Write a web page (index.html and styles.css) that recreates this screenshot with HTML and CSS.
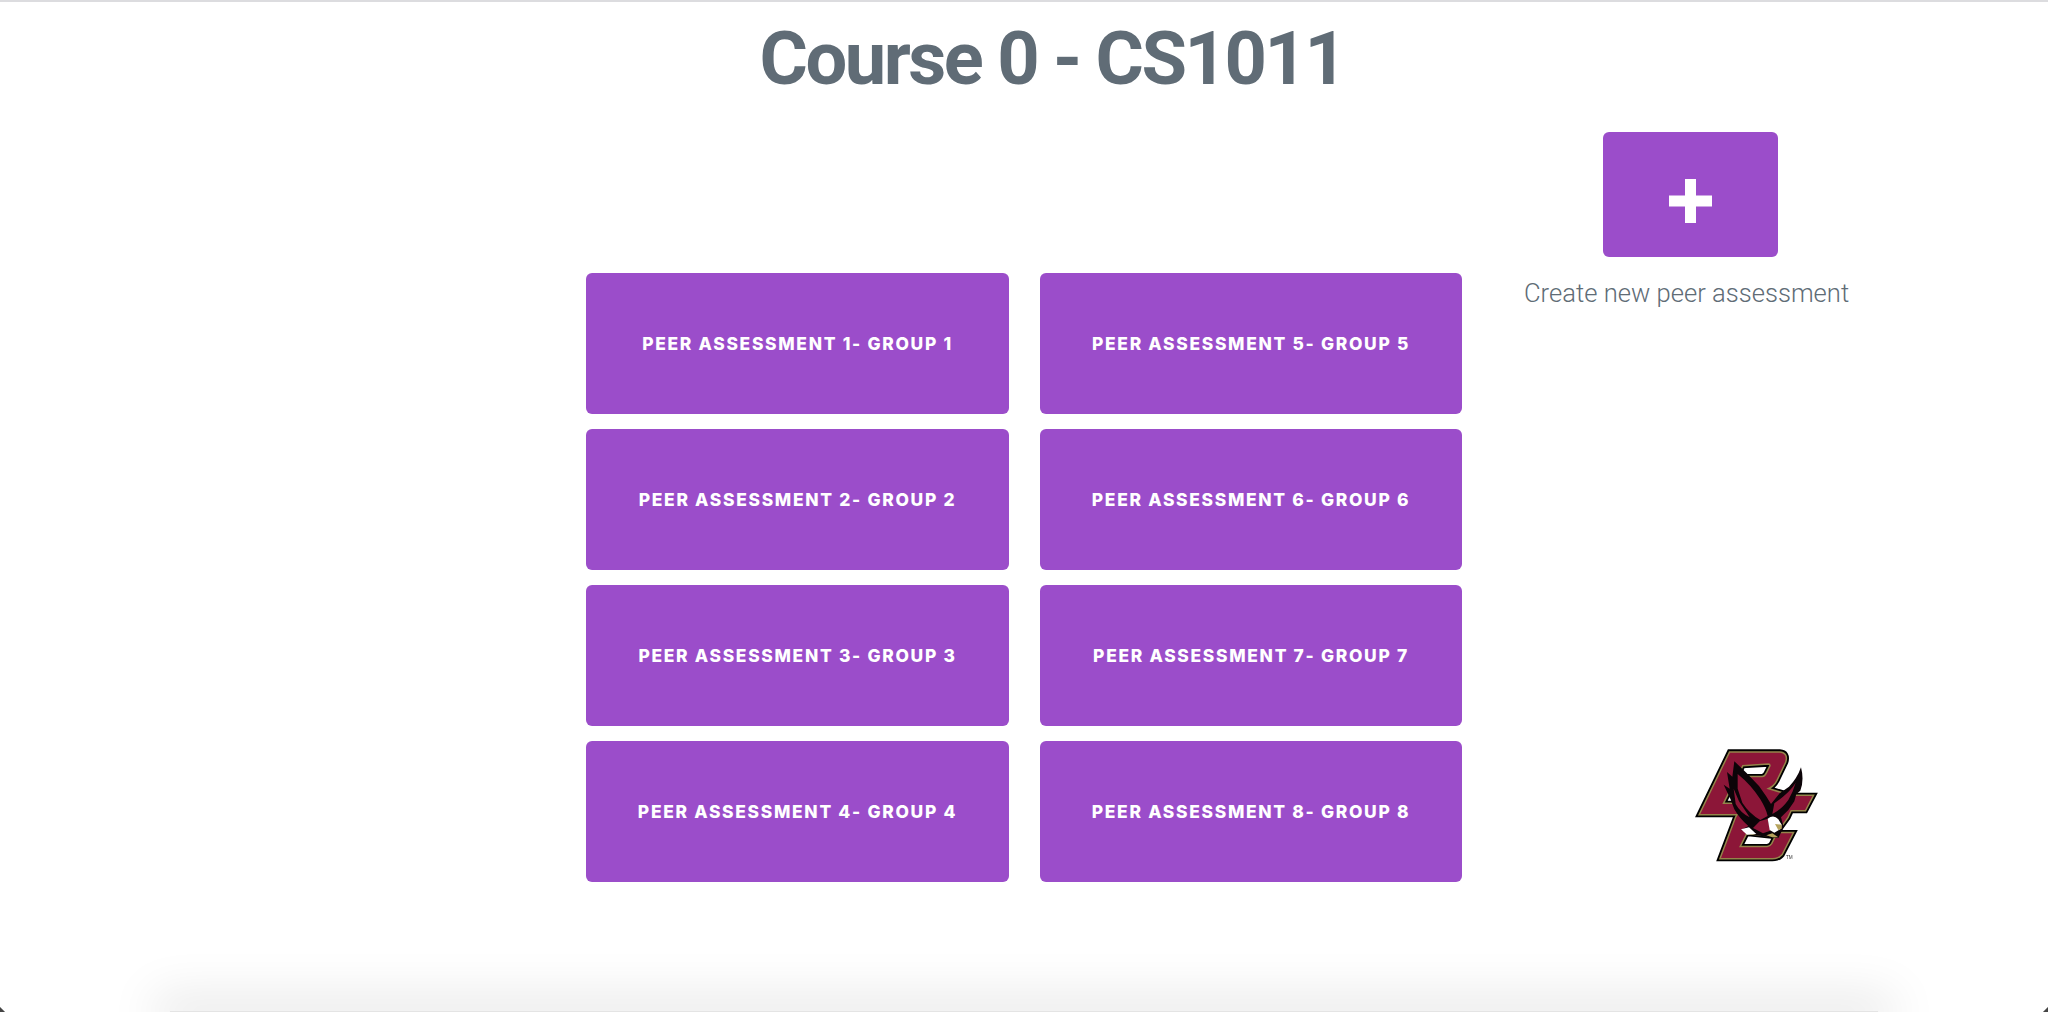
FILE: index.html
```html
<!DOCTYPE html>
<html>
<head>
    <title>Course 0 - CS1011</title>
    <link rel="stylesheet" href="styles.css">
</head>
<body>

    <div class="page">
        <h1 class="course-title">Course 0 - CS1011</h1>

        <div class="content">
            <div class="assessments">
                <a class="button">Peer Assessment 1- Group 1</a>
                <a class="button">Peer Assessment 5- Group 5</a>
                <a class="button">Peer Assessment 2- Group 2</a>
                <a class="button">Peer Assessment 6- Group 6</a>
                <a class="button">Peer Assessment 3- Group 3</a>
                <a class="button">Peer Assessment 7- Group 7</a>
                <a class="button">Peer Assessment 4- Group 4</a>
                <a class="button">Peer Assessment 8- Group 8</a>
            </div>

            <div class="side">
                <a class="add-button">
                    <svg class="plus" viewBox="0 0 43 44"><path d="M16 0h11v16.500h16v11H27V44H16V27.500H0v-11h16z"/></svg>
                </a>
                <p class="add-label">Create new peer assessment</p>

                <svg class="logo" viewBox="0 0 540 450">
                    <defs>
                        <path id="letters" fill-rule="evenodd" d="M213 68H362Q386 70 378 96L352 150Q342 170 322 176L395 198H460L438 240H395L385 262L350 310H400L368 372Q358 384 340 384H186L232 262L238 252H124ZM250 105L232 142H310Q320 140 325 128L335 108Q336 100 328 100ZM215 172L190 222H255L280 172ZM262 308L240 352H325Q335 350 340 342L352 318Z"/>
                    </defs>
                    <use href="#letters" class="logo-black"/>
                    <use href="#letters" class="logo-gold"/>
                    <use href="#letters" class="logo-maroon"/>
                    <!-- eagle -->
                    <path class="logo-wing" d="M226 94L262 128L300 168Q322 198 336 222L362 190L390 170Q414 146 426 112Q436 150 424 182L412 192L406 214L388 240L366 262L374 292L358 324L322 320L292 316L246 300L268 288Q242 266 226 238L214 206L194 164L212 176L204 126L220 140Z"/>
                    <path class="logo-feather" d="M236 132Q276 164 304 208Q322 238 326 258L304 270Q270 250 250 218L236 176ZM224 176L240 214L272 262Q244 248 230 222ZM410 158Q394 186 346 220L340 252Q368 238 388 210Q402 186 410 158ZM302 274L326 266L334 302L312 310L282 294Z"/>
                    <path class="logo-white" d="M326 266Q344 252 358 268L368 284L366 296L346 308L332 300ZM246 298L270 292L292 312L264 314Z"/>
                    <path class="logo-beak" d="M348 282L368 284L368 296L358 300Z"/>
                    <path class="logo-beak" d="M322 316L340 310L358 322L340 322Z"/>
                    <text class="logo-tm" x="381" y="387">TM</text>
                </svg>
            </div>
        </div>

        <div class="bottom-shadow"></div>
        <span class="corner corner-left"></span>
        <span class="corner corner-right"></span>
    </div>

</body>
</html>
```

FILE: styles.css
```css
* {
    box-sizing: border-box;
}

html, body {
    margin: 0;
    height: 100%;
}

body {
    background: #fff;
    color: #606c76;
    font-family: Roboto, "Liberation Sans", sans-serif;
}

.page {
    position: relative;
    display: flex;
    flex-direction: column;
    height: 1012px;
    overflow: hidden;
    border-top: 2px solid #dcdcdf;
}

.course-title {
    margin: 14px 0 0 56px;
    font-size: 74px;
    line-height: 86px;
    font-weight: 700;
    letter-spacing: -2.5px;
    text-align: center;
}

.content {
    display: flex;
    padding-left: 586px;
}

.assessments {
    display: grid;
    grid-template-columns: 423px 422px;
    grid-auto-rows: 141px;
    gap: 15px 31px;
    margin-top: 171px;
}

.button {
    display: flex;
    align-items: center;
    justify-content: center;
    background: #9b4dca;
    border-radius: 6px;
    color: #fff;
    font-family: Inter, "Liberation Sans", sans-serif;
    font-size: 17.4px;
    font-weight: 800;
    letter-spacing: 1.7px;
    text-transform: uppercase;
}

.side {
    display: flex;
    flex-direction: column;
    align-items: flex-start;
    margin: 30px 0 0 62px;
    width: 340px;
}

.add-button {
    display: flex;
    align-items: center;
    justify-content: center;
    width: 175px;
    height: 125px;
    margin-left: 79px;
    padding-top: 12px;
    background: #9b4dca;
    border-radius: 6px;
}

.plus {
    width: 43px;
    height: 44px;
    fill: #fff;
}

.add-label {
    margin: 19px 0 0;
    font-size: 25.6px;
    line-height: 34px;
    font-weight: 300;
    white-space: nowrap;
}

.logo {
    width: 180px;
    height: 150px;
    margin: 420px 0 0 135px;
    filter: blur(0.4px);
}

.logo-black {
    fill: #000;
    stroke: #000;
    stroke-width: 20px;
    stroke-linejoin: miter;
}

.logo-gold {
    fill: #000;
    stroke: #94844a;
    stroke-width: 9px;
}

.logo-maroon {
    fill: #8c1638;
}

.logo-wing {
    fill: #0c0408;
}

.logo-feather {
    fill: #8c1638;
}

.logo-white {
    fill: #fff;
}

.logo-beak {
    fill: #b6a35c;
}

.logo-tm {
    font-family: "Liberation Sans", sans-serif;
    font-size: 14px;
    fill: #333;
}

.bottom-shadow {
    height: 1px;
    margin: auto 170px 0;
    background: #e4e4e4;
    box-shadow: 0 0 48px 16px rgba(0, 0, 0, 0.1);
}

.corner {
    position: absolute;
    bottom: 0;
    width: 6px;
    height: 6px;
}

.corner-left {
    left: 0;
    background: linear-gradient(45deg, #444 35%, transparent 50%);
}

.corner-right {
    right: 0;
    background: linear-gradient(-45deg, #444 35%, transparent 50%);
}
```
